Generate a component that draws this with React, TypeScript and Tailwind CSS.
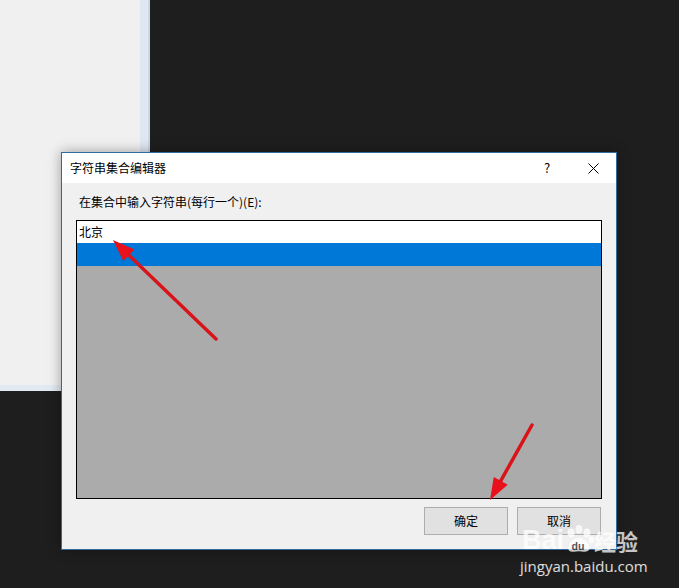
import React from 'react'

const FONT = { fontFamily: '"Microsoft YaHei", "Noto Sans CJK SC", "Noto Sans", sans-serif' }

function Arrow({ x1, y1, x2, y2 }: { x1: number; y1: number; x2: number; y2: number }) {
  // arrowhead at (x2, y2)
  const dx = x2 - x1
  const dy = y2 - y1
  const len = Math.hypot(dx, dy)
  const ux = dx / len
  const uy = dy / len
  const hl = 22
  const hw = 8
  const bx = x2 - ux * hl
  const by = y2 - uy * hl
  const p1 = `${bx - uy * hw},${by + ux * hw}`
  const p2 = `${bx + uy * hw},${by - ux * hw}`
  return (
    <g>
      <line x1={x1} y1={y1} x2={bx + ux * 2} y2={by + uy * 2} stroke="#d8141a" strokeWidth={3.5} strokeLinecap="round" />
      <polygon points={`${x2},${y2} ${p1} ${p2}`} fill="#e8101a" />
    </g>
  )
}

export default function App() {
  return (
    <div className="relative w-[679px] h-[588px] overflow-hidden bg-[#1e1e1e]" style={FONT}>
      {/* window behind */}
      <div className="absolute left-0 top-0 w-[150px] h-[391px] flex flex-col">
        <div className="flex flex-1">
          <div className="flex-1 bg-[#f0f0f0]" />
          <div className="w-[10px] bg-[#dfe7f0] border-r-2 border-[#c9d7e6]" />
        </div>
        <div className="h-[6px] bg-[#e1e9f2]" />
      </div>

      {/* dialog */}
      <div className="absolute left-[61px] top-[152px] w-[556px] h-[398px] border border-[#2f6aa0] bg-[#f0f0f0] flex flex-col shadow-[0_0_12px_rgba(0,0,0,0.35)]">
        <div className="h-[30px] bg-white flex items-center pl-[8px] text-[12px] text-black">
          <span className="flex-1">字符串集合编辑器</span>
          <span className="w-[46px] text-center text-[13px]">?</span>
          <span className="w-[46px] flex justify-center">
            <svg width="11" height="11" viewBox="0 0 11 11">
              <path d="M0.5 0.5 L10.5 10.5 M10.5 0.5 L0.5 10.5" stroke="#000" strokeWidth="1" />
            </svg>
          </span>
        </div>
        <div className="flex-1 flex flex-col px-[14px] pt-[11px]">
          <div className="text-[12px] text-black leading-[16px] pl-[3px]">在集合中输入字符串(每行一个)(E):</div>
          <div className="mt-[10px] w-[526px] h-[279px] border border-black bg-[#ababab] flex flex-col">
            <div className="h-[22px] bg-white text-[12px] text-black leading-[22px] pl-[2px]">北京</div>
            <div className="h-[23px] bg-[#0078d7]" />
          </div>
          <div className="flex justify-end gap-[9px] mt-[8px] pr-[1px]">
            <button className="w-[84px] h-[28px] bg-[#e1e1e1] border border-[#adadad] text-[12px] text-black">确定</button>
            <button className="w-[84px] h-[28px] bg-[#e1e1e1] border border-[#adadad] text-[12px] text-black">取消</button>
          </div>
        </div>
      </div>

      {/* annotations */}
      <svg className="absolute left-0 top-0" width="679" height="588">
        <Arrow x1={216} y1={339} x2={113} y2={240} />
        <Arrow x1={532} y1={425} x2={490} y2={500} />
      </svg>

      {/* watermark */}
      <div className="absolute left-[522px] top-[524px] flex items-end h-[30px] opacity-75 text-white" style={{ fontFamily: '"Liberation Sans", "Noto Sans CJK SC", sans-serif' }}>
        <span className="text-[27px] font-bold leading-[27px]">Bai</span>
        <svg width="30" height="30" viewBox="0 0 34 32">
          <ellipse cx="8" cy="9" rx="4" ry="5" fill="#fff" />
          <ellipse cx="17" cy="5" rx="4" ry="5" fill="#fff" />
          <ellipse cx="26" cy="9" rx="4" ry="5" fill="#fff" />
          <ellipse cx="31" cy="17" rx="3" ry="4" fill="#fff" />
          <path d="M5 27 C5 20 11 15 17 15 C23 15 29 21 29 26 C29 31 23 31 17 30 C11 31 5 31 5 27 Z" fill="#fff" />
          <text x="8.5" y="28" fontSize="12" fontWeight="bold" fill="#1e1e1e" fontFamily="Liberation Sans, sans-serif">du</text>
        </svg>
        <span className="text-[22px] font-bold leading-[27px]" style={{ fontFamily: '"Noto Sans CJK SC", sans-serif' }}>经验</span>
      </div>
      <div className="absolute left-[520px] top-[557px] text-[15px] leading-[18px] text-white/85" style={{ fontFamily: '"Open Sans", "Liberation Sans", sans-serif' }}>
        jingyan.baidu.com
      </div>
    </div>
  )
}
